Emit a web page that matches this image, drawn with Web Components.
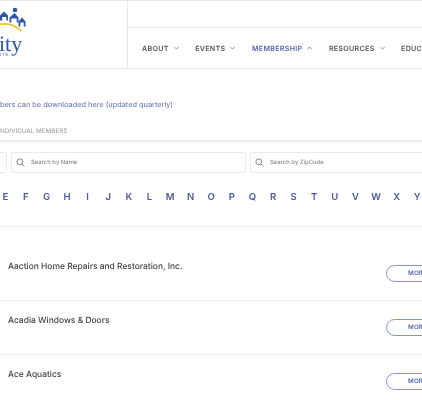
<!DOCTYPE html>
<html><head><meta charset="utf-8"><style>
html,body{margin:0;padding:0;background:#fff;overflow:hidden;width:422px;height:400px}
body{font-family:"Inter","Liberation Sans",sans-serif;text-rendering:geometricPrecision}
site-header,member-page{filter:blur(.3px)}
</style></head><body>
<site-header></site-header>
<member-page></member-page>
<script>
const FONT='font-family:Inter,"Liberation Sans",sans-serif;';
const chev=(up,c)=>`<svg width="5" height="4" viewBox="0 0 5 4" style="margin-left:5px;flex:none"><path d="${up?'M.4 3.1 2.5 1l2.1 2.1':'M.4 1 2.5 3.1 4.6 1'}" fill="none" stroke="${c}" stroke-width=".8"/></svg>`;
class NavItem extends HTMLElement{
  constructor(){super();const s=this.attachShadow({mode:'open'});
    const a=this.hasAttribute('active');const c=a?'#5b66a8':'#555';
    s.innerHTML=`<style>:host{display:flex;align-items:center;flex:none;${FONT}font-size:7.1px;font-weight:600;letter-spacing:.3px;color:${c};white-space:nowrap}</style><slot></slot>${this.hasAttribute('nochev')?'':chev(a,a?'#5b66a8':'#777')}`;}
}
customElements.define('nav-item',NavItem);
class SiteHeader extends HTMLElement{
  constructor(){super();this.attachShadow({mode:'open'}).innerHTML=`<style>
  :host{display:block;height:69px;box-sizing:border-box;border-top:1.5px solid #e6e6e6;border-bottom:1px solid #e8e8e8}
  .wrap{display:flex;height:100%}
  .logo{width:128px;flex:none;box-sizing:border-box;border-right:1px solid #e8e8e8;overflow:hidden}
  .logo svg{display:block}
  .side{flex:1;min-width:0;display:flex;flex-direction:column}
  .top{height:26px;border-bottom:1px solid #e8e8e8;flex:none}
  nav{flex:1;display:flex;align-items:center;padding-left:14px;gap:16.500px;overflow:hidden}
  </style><div class="wrap"><div class="logo">
  <svg width="40" height="60" viewBox="0 1.5 40 60">
    <path d="M0 25Q11 22 21.500 31.500" fill="none" stroke="#efc531" stroke-width="1.800"/>
    <g fill="#2f56a6">
      <path d="M0 16 4 12l4 4V21H6.300v-3.500H2.200V21H0z"/>
      <circle cx="15" cy="10.500" r="2.300"/>
      <path d="M9.500 18l5-4.500 4 4.500v5h-1.800v-4h-5.400v4H9.500z"/>
      <path d="M18.500 22l3.500-4 3.500 4v5h-1.800v-4h-3.400v4h-1.800z"/>
    </g>
    <text x="-1" y="51" font-family="Liberation Serif,serif" font-size="22" fill="#2f56a6">ity</text>
    <text x="0" y="56.500" font-family="Liberation Sans,sans-serif" font-size="4.500" letter-spacing=".7" fill="#2f56a6">ITE</text>
  </svg></div>
  <div class="side"><div class="top"></div><nav>
    <nav-item>ABOUT</nav-item><nav-item>EVENTS</nav-item><nav-item active>MEMBERSHIP</nav-item><nav-item>RESOURCES</nav-item><nav-item nochev>EDUCATION</nav-item>
  </nav></div></div>`;}
}
customElements.define('site-header',SiteHeader);
class SearchBox extends HTMLElement{
  constructor(){super();this.attachShadow({mode:'open'}).innerHTML=`<style>
  :host{display:flex;align-items:center;box-sizing:border-box;height:21px;border:1px solid #eaeaea;border-radius:2px;padding-left:4px;gap:6px;${FONT}font-size:5.900px;font-weight:500;color:#8a8a8a;background:#fff;white-space:nowrap;overflow:hidden}
  </style><svg width="9" height="9" viewBox="0 0 9 9" fill="none" stroke="#777" stroke-width=".9"><circle cx="3.800" cy="3.800" r="2.900"/><path d="M6 6l2.400 2.400"/></svg><slot></slot>`;}
}
customElements.define('search-box',SearchBox);
class MemberRow extends HTMLElement{
  constructor(){super();this.attachShadow({mode:'open'}).innerHTML=`<style>
  :host{display:flex;justify-content:space-between;box-sizing:border-box;height:53.800px;border-bottom:1px solid #eee;padding:14px 0 0 8px;width:446px;${FONT}}
  .n{font-size:8.450px;font-weight:500;color:#444;line-height:12px;white-space:nowrap}
  .b{flex:none;box-sizing:border-box;width:60px;height:17px;margin-top:4px;border:1px solid #8794c4;border-radius:9px;font-size:6.200px;font-weight:600;letter-spacing:.2px;color:#5b66a8;padding-left:21px;line-height:15px}
  </style><div class="n"><slot></slot></div><div class="b">MORE</div>`;}
}
customElements.define('member-row',MemberRow);
class MemberPage extends HTMLElement{
  constructor(){super();
    const letters='EFGHIJKLMNOPQRSTUVWXY'.split('').map(l=>`<span>${l}</span>`).join('');
    this.attachShadow({mode:'open'}).innerHTML=`<style>
  :host{display:block;${FONT}width:422px;overflow:hidden}
  .dl{margin:30px 0 0;font-size:7.400px;letter-spacing:-.02px;line-height:12px;color:#6470ad;white-space:nowrap;font-weight:400}
  .tab{margin-top:15px;font-size:6.300px;line-height:10px;font-weight:500;color:#a5a5a5;white-space:nowrap;padding-bottom:4px;border-bottom:2px solid #ededed;height:10px}
  .tab span{margin-left:0;display:inline-block}
  .search{display:flex;gap:4px;margin-top:10px;margin-left:-60px;width:560px}
  .search>*{flex:none}
  .alpha{display:flex;margin-top:18px;font-size:9.500px;line-height:14px;font-weight:600;color:#4c5896;height:35px;border-bottom:1px solid #f0f0f0;margin-left:-5px}
  .alpha span{flex:none;width:20.600px;text-align:center}
  .rows{margin-top:20px}
  </style>
  <div class="dl">bers can be downloaded here (updated quarterly)</div>
  <div class="tab"><span>NDIVIDUAL MEMBERS</span></div>
  <div class="search"><search-box style="width:67px"></search-box><search-box style="width:235px">Search by Name</search-box><search-box style="width:250px">Search by ZipCode</search-box></div>
  <div class="alpha">${letters}</div>
  <div class="rows"><member-row>Aaction Home Repairs and Restoration, Inc.</member-row><member-row>Acadia Windows &amp; Doors</member-row><member-row>Ace Aquatics</member-row></div>`;}
}
customElements.define('member-page',MemberPage);
</script></body></html>
